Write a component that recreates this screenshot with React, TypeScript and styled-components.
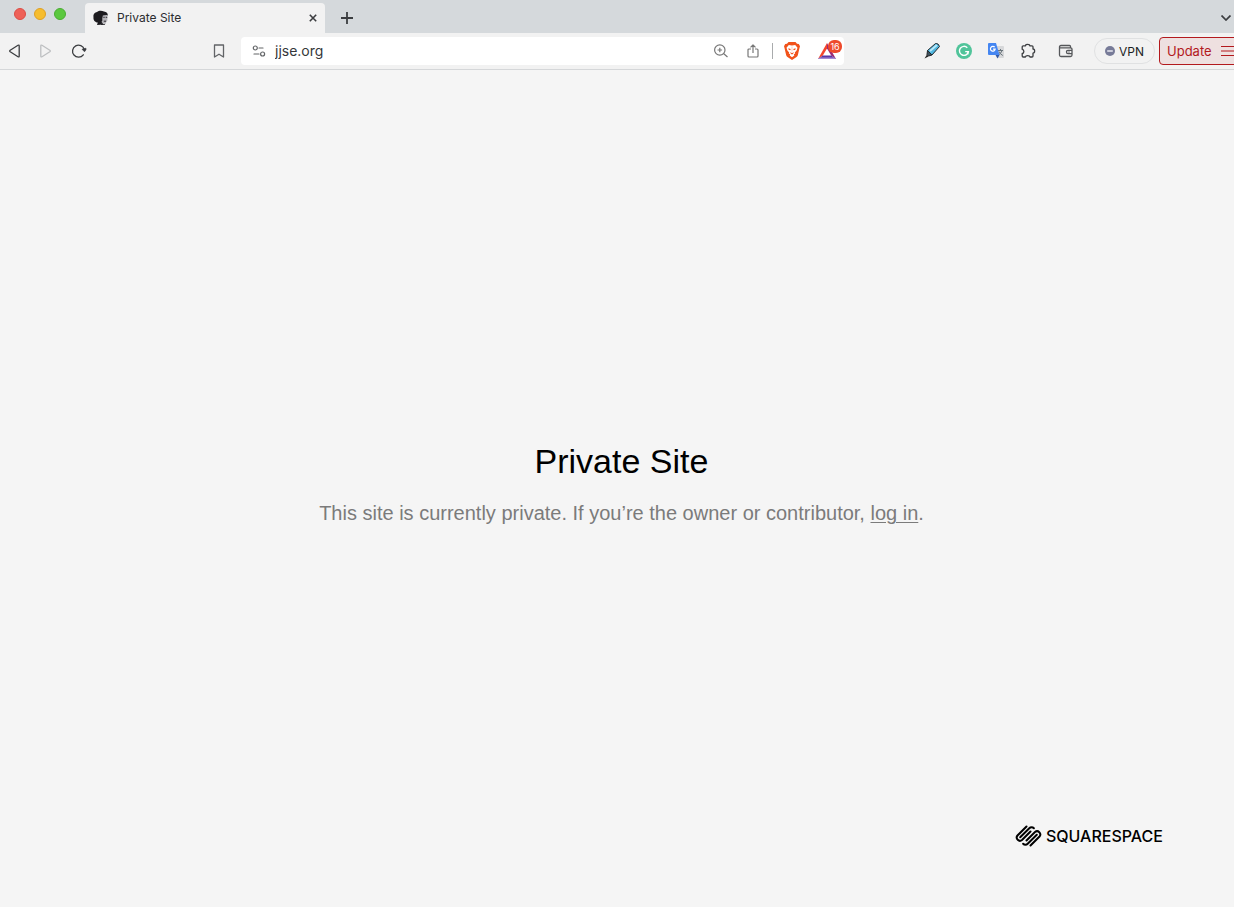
import React from "react";
import styled, { createGlobalStyle } from "styled-components";

const GlobalStyle = createGlobalStyle`
  *, *::before, *::after { box-sizing: border-box; }
  body { margin: 0; background: #f5f5f5; overflow: hidden; }
  button, input { font: inherit; color: inherit; }
  svg { display: block; flex: none; }
`;

const uiFont = `Inter, "Liberation Sans", sans-serif`;
const pageFont = `"Liberation Sans", Helvetica, Arial, sans-serif`;

/* The window runs slightly past the right edge of the screen. */
const BrowserWindow = styled.div`
  display: flex;
  flex-direction: column;
  min-height: 100vh;
  margin-right: -9px;
  font-family: ${uiFont};
`;

const TabStrip = styled.header`
  display: flex;
  height: 33px;
  padding-right: 9px;
  background: #d5d9dc;
`;

const WindowControls = styled.div`
  display: flex;
  gap: 8px;
  width: 85px;
  padding: 8px 0 0 14px;
`;

const ControlDot = styled.button<{ $fill: string; $edge: string }>`
  width: 12px;
  height: 12px;
  padding: 0;
  border: 1px solid ${(p) => p.$edge};
  border-radius: 50%;
  background: ${(p) => p.$fill};
`;

const Tab = styled.div`
  display: flex;
  align-items: center;
  width: 240px;
  margin-top: 3px;
  padding: 0 5px 0 8px;
  border-radius: 4px 4px 0 0;
  background: #f2f2f2;
`;

const TabTitle = styled.span`
  flex: 1;
  margin-left: 8px;
  font-size: 12px;
  line-height: 16px;
  color: #2b2d30;
`;

const IconButton = styled.button<{ $size?: number; $color?: string }>`
  display: flex;
  flex: none;
  align-items: center;
  justify-content: center;
  width: ${(p) => p.$size ?? 32}px;
  height: ${(p) => Math.min(p.$size ?? 28, 28)}px;
  padding: 0;
  border: 0;
  background: none;
  color: ${(p) => p.$color ?? "#3b3d40"};
`;

const NewTab = styled(IconButton)`
  margin: 4px auto 0 8px;
`;

const TabSearch = styled(IconButton)`
  margin-top: 10px;
`;

const Toolbar = styled.nav`
  display: flex;
  align-items: center;
  height: 37px;
  border-bottom: 1px solid #d5d7d9;
  background: #f2f2f2;
`;

const Navigation = styled.div`
  display: flex;
  width: 203px;
`;

const AddressBar = styled.div`
  display: flex;
  flex: 1;
  align-items: center;
  min-width: 200px;
  height: 28px;
  margin-left: 6px;
  padding-left: 8px;
  border-radius: 4px;
  background: #fff;
`;

const AddressInput = styled.input`
  flex: 1;
  min-width: 0;
  padding: 0;
  border: 0;
  outline: 0;
  margin-left: 6px;
  background: none;
  font-size: 14px;
  line-height: 20px;
  color: #35373a;
`;

const Divider = styled.span`
  width: 1px;
  height: 16px;
  margin: 0 3px;
  background: #a9abad;
`;

const RewardsButton = styled(IconButton)`
  position: relative;
  margin-left: 2px;
`;

const Badge = styled.span`
  position: absolute;
  top: 3px;
  right: 2px;
  width: 14px;
  height: 13px;
  border-radius: 6px;
  background: #ee4a2c;
  color: #fff;
  font-size: 9px;
  line-height: 13px;
  text-align: center;
`;

const Extensions = styled.div`
  display: flex;
  width: 311px;
  padding-left: 72px;
  align-items: center;
`;

const WalletButton = styled(IconButton)`
  margin: 0 12px 0 6px;
`;

const VpnButton = styled.button`
  display: flex;
  flex: none;
  align-items: center;
  justify-content: center;
  gap: 4px;
  width: 61px;
  height: 26px;
  padding: 0;
  border: 1px solid #e0e1e2;
  border-radius: 13px;
  background: #f2f2f2;
  font-size: 12px;
  color: #1d1f25;
`;

const UpdateButton = styled.button`
  display: flex;
  align-items: center;
  justify-content: space-between;
  width: 84px;
  height: 28px;
  padding: 0 5px 0 7px;
  margin-left: 4px;
  border: 1px solid #b3191d;
  border-radius: 4px;
  background: #eee0e0;
  font-size: 13px;
  color: #b3191d;
`;

const Page = styled.main`
  display: grid;
  flex: 1;
  grid-template-rows: 1fr auto 1fr;
  padding-bottom: 8px;
  background: #f5f5f5;
  font-family: ${pageFont};
`;

const Message = styled.section`
  grid-row: 2;
  text-align: center;
`;

const Heading = styled.h1`
  margin: 0 0 16px;
  font-size: 34px;
  font-weight: 400;
  line-height: 40px;
  color: #000;
`;

const Text = styled.p`
  margin: 0;
  font-size: 20px;
  line-height: 32px;
  color: #7b7b7b;
`;

const LoginLink = styled.a`
  color: inherit;
  text-decoration: underline;
  text-decoration-thickness: 1px;
  text-underline-offset: 2px;
`;

const Footer = styled.footer`
  display: flex;
  grid-row: 3;
  align-items: flex-end;
  justify-content: flex-end;
  padding: 0 80px 50px;
`;

const BrandLink = styled.a`
  display: flex;
  align-items: center;
  gap: 4px;
  color: #000;
  font-family: ${uiFont};
  font-size: 16px;
  font-weight: 500;
  line-height: 26px;
  text-decoration: none;
`;

const Favicon = () => (
  <svg width="16" height="16" viewBox="0 0 16 16" aria-hidden="true">
    <path d="M.5 7C0 4 2 2.200 4 2c2-1.800 5-1.500 7-.5 2.500.3 4 2 3.800 4L10 6 9.500 9l.8 2.500L7.500 14.800 4 15l.8-2.500C2 12.500 0 10 .5 7z" fill="#1c1b1f" />
    <path d="M9.800 5.500l4.400-.5.300 2.700-.2 3-1.800 2.500-2.500.6-1.500-1.800 1-2z" fill="#b5b4b9" />
    <path d="M10.300 7.300h1.400m1 0h1.500M10.800 11.200h2.200" stroke="#2a292d" strokeWidth="1" fill="none" />
    <path d="M8.500 12l2 2.200 2-.7-1 1.500H7.500z" fill="#2a292d" />
  </svg>
);

const Triangle = ({ flip }: { flip?: boolean }) => (
  <svg width="14" height="14" viewBox="0 0 14 14" fill="none" stroke="currentColor" strokeWidth="1.300" strokeLinejoin="round" aria-hidden="true">
    <path d={flip ? "M3 1.300Q1.800.6 1.800 2V12Q1.800 13.400 3 12.700L10.800 7.800Q11.800 7 10.800 6.200Z" : "M11 1.300Q12.200.6 12.200 2V12Q12.200 13.400 11 12.700L3.200 7.800Q2.200 7 3.200 6.200Z"} />
  </svg>
);

const Reload = () => (
  <svg width="16" height="16" viewBox="0 0 16 16" fill="none" stroke="currentColor" strokeWidth="1.300" aria-hidden="true">
    <path d="M12.300 11.800A6 6 0 1 1 13.300 6.500" strokeLinecap="round" />
    <path d="M11 6.200L15 5.200V6.800L13.500 8.800z" fill="currentColor" strokeWidth=".6" strokeLinejoin="round" />
  </svg>
);

const Bookmark = () => (
  <svg width="12" height="14" viewBox="0 0 12 14" fill="none" stroke="currentColor" strokeWidth="1.300" strokeLinejoin="round" aria-hidden="true">
    <path d="M1.500 1H10.500V13L6 10.200 1.500 13z" />
  </svg>
);

const SiteSettings = () => (
  <svg width="14" height="14" viewBox="0 0 14 14" fill="none" stroke="currentColor" strokeWidth="1.200" strokeLinecap="round" aria-hidden="true">
    <circle cx="3.300" cy="4" r="2" />
    <path d="M7 4h4M2 10h5" />
    <circle cx="10.600" cy="10" r="2" />
  </svg>
);

const ZoomIn = () => (
  <svg width="16" height="16" viewBox="0 0 16 16" fill="none" stroke="currentColor" strokeWidth="1.200" aria-hidden="true">
    <circle cx="6.800" cy="7" r="5.200" />
    <path d="M10.800 10.800L14.500 14M4.500 7h4.600M6.800 4.700v4.600" />
  </svg>
);

const Share = () => (
  <svg width="14" height="16" viewBox="0 0 14 16" fill="none" stroke="currentColor" strokeWidth="1.200" strokeLinejoin="round" aria-hidden="true">
    <path d="M5 6H3Q2 6 2 7V13Q2 14 3 14H11Q12 14 12 13V7Q12 6 11 6H9M7 10V2M4.500 4.300L7 1.800 9.500 4.300" />
  </svg>
);

const Shields = () => (
  <svg width="16" height="18" viewBox="0 0 16 18" aria-hidden="true">
    <path d="M4.500 0H11.500L13 1.700 14.800 1.900 16 4.300 15.500 6 13.800 13.200Q13.500 14.300 12.500 15L8 18 3.500 15Q2.500 14.300 2.200 13.200L.5 6 0 4.300 1.200 1.900 3 1.700z" fill="#f1521a" />
    <path d="M4.800 3L8 3.500 11.200 3 13.500 5.800 12.600 8.500 10.800 10.400 11.200 11.600 9.800 12.300 10.300 13.500 8 15.300 5.700 13.500 6.200 12.300 4.800 11.600 5.200 10.400 3.400 8.500 2.500 5.800z" fill="#fff" />
    <path d="M4.300 6.300L6.800 7 6.200 8.200 4.700 7.700zM11.700 6.300L9.200 7 9.800 8.200 11.300 7.700zM6.300 10L8 11.200 9.700 10 9.200 11.700 8 12.400 6.800 11.700z" fill="#f1521a" />
    <path d="M8 4.500v5" stroke="#f9b79e" strokeWidth=".7" />
  </svg>
);

const Rewards = () => (
  <svg width="18" height="16" viewBox="0 0 18 16" aria-hidden="true">
    <path d="M9 0L0 16 4.800 12.600 9 5.500z" fill="#f4452c" />
    <path d="M9 0L18 16 13.200 12.600 9 5.500z" fill="#9c2a73" />
    <path d="M0 16L4.800 12.600H13.200L18 16z" fill="#5a35a3" />
    <path d="M0 16L2 14.600H16L18 16z" fill="#a58ad3" />
  </svg>
);

const Highlighter = () => (
  <svg width="18" height="18" viewBox="0 0 18 18" aria-hidden="true">
    <path d="M4.500 8.500L12.500 1.500Q15.500 1 16.500 4.500L9 13z" fill="#4fb6df" stroke="#222a30" strokeWidth="1" strokeLinejoin="round" />
    <path d="M7 9L14 3" stroke="#b9e9fa" strokeWidth="2" />
    <path d="M4.500 8.500L9 13 5.500 14 4 12.500z" fill="#3f525e" stroke="#20262b" />
    <path d="M4 12.500L1.500 16.500 5.500 14.500z" fill="#222" />
  </svg>
);

const Grammarly = () => (
  <svg width="16" height="16" viewBox="0 0 16 16" aria-hidden="true">
    <circle cx="8" cy="8" r="8" fill="#50c49a" />
    <path d="M11.300 4.800A4.500 4.500 0 1 0 12.400 8.600H9.200" fill="none" stroke="#fff" strokeWidth="1.400" />
    <path d="M12 8.500V11.500" fill="none" stroke="#fff" strokeWidth="1" />
  </svg>
);

const Translate = () => (
  <svg width="16" height="16" viewBox="0 0 16 16" aria-hidden="true">
    <path d="M7 3H15Q16 3 16 4V14Q16 15 15 15H10z" fill="#d7d8da" />
    <path d="M10 7.500H15M12.500 6v1.500M14.200 7.500Q12.500 11 10.500 12M11 8.500Q12 11 14.800 12.500" stroke="#69747b" strokeWidth="1" fill="none" />
    <path d="M1 0H8L11.500 12H1Q0 12 0 11V1Q0 0 1 0z" fill="#4586f1" />
    <path d="M7.500 12h4L9.500 15.500z" fill="#3158a5" />
    <path d="M6.700 4.200A2.400 2.400 0 1 0 7.200 6.200H5" fill="none" stroke="#fff" strokeWidth="1.200" />
  </svg>
);

const Puzzle = () => (
  <svg width="16" height="16" viewBox="0 0 16 16" fill="none" stroke="currentColor" strokeWidth="1.300" strokeLinejoin="round" aria-hidden="true">
    <path d="M3.200 2.800H5.500C5.500.8 9.800.8 9.800 2.800H12Q13 2.800 13 3.800V6C15.200 6 15.200 10.200 13 10.200V13Q13 14 12 14H10C9.800 12.200 5.600 12.200 5.400 14H3.200Q2.200 14 2.200 13V10.500C4.400 10.300 4.400 6.500 2.200 6.300V3.800Q2.200 2.800 3.200 2.800z" />
  </svg>
);

const Wallet = () => (
  <svg width="16" height="14" viewBox="0 0 16 14" fill="none" stroke="currentColor" strokeWidth="1.300" strokeLinejoin="round" aria-hidden="true">
    <path d="M12.500 3.500V2.500Q12.500 1.500 11.500 1.500H3Q1.500 1.500 1.500 3V11Q1.500 12.500 3 12.500H12.500Q14 12.500 14 11V5Q14 3.800 12.500 3.800H2" />
    <path d="M14 6.300H10Q8.500 6.300 8.500 8T10 9.700H14M10.500 8h1" />
  </svg>
);

const VpnStatus = () => (
  <svg width="10" height="10" viewBox="0 0 10 10" aria-hidden="true">
    <circle cx="5" cy="5" r="5" fill="#777b98" />
    <path d="M2.200 5h5.600" stroke="#e8e9f2" strokeWidth="1.500" />
  </svg>
);

const Menu = () => (
  <svg width="16" height="12" viewBox="0 0 16 12" stroke="currentColor" aria-hidden="true">
    <path d="M0 1.500h16M0 6h16M0 10.500h16" strokeWidth="1.100" />
  </svg>
);

const Cross = () => (
  <svg width="8" height="8" viewBox="0 0 8 8" stroke="currentColor" strokeWidth="1.600" aria-hidden="true">
    <path d="M.8.8l6.400 6.400M7.200.8L.8 7.200" />
  </svg>
);

const Plus = () => (
  <svg width="12" height="12" viewBox="0 0 12 12" stroke="currentColor" strokeWidth="1.800" aria-hidden="true">
    <path d="M6 0v12M0 6h12" />
  </svg>
);

const Chevron = () => (
  <svg width="10" height="6" viewBox="0 0 10 6" fill="none" stroke="currentColor" strokeWidth="1.700" aria-hidden="true">
    <path d="M.5.5L5 5 9.500.5" />
  </svg>
);

const SquarespaceMark = () => (
  <svg width="27" height="22" viewBox="0 0 27 22" fill="none" stroke="currentColor" strokeWidth="2" strokeLinecap="round" aria-hidden="true">
    <path d="M11.500 1.500L2.500 10.500a3.200 3.200 0 0 0 4.500 4.500L15.500 6.500" />
    <path d="M5.200 12.300L14.300 3.200a3.200 3.200 0 0 1 4.600 0" />
    <path d="M15.500 20.500L24.500 11.500a3.200 3.200 0 0 0-4.500-4.500L11.500 15.500" />
    <path d="M21.800 9.700L12.700 18.800a3.200 3.200 0 0 1-4.600 0" />
  </svg>
);

export default function App() {
  return (
    <>
      <GlobalStyle />
      <BrowserWindow>
        <TabStrip>
          <WindowControls>
            <ControlDot aria-label="Close window" $fill="#ee6158" $edge="#dc4c45" />
            <ControlDot aria-label="Minimize window" $fill="#f6bd2f" $edge="#dfa023" />
            <ControlDot aria-label="Zoom window" $fill="#5bc83f" $edge="#4aad31" />
          </WindowControls>
          <Tab>
            <Favicon />
            <TabTitle>Private Site</TabTitle>
            <IconButton aria-label="Close tab" $size={14}><Cross /></IconButton>
          </Tab>
          <NewTab aria-label="New tab" $size={28}><Plus /></NewTab>
          <TabSearch aria-label="Search tabs" $size={16}><Chevron /></TabSearch>
        </TabStrip>

        <Toolbar aria-label="Browser toolbar">
          <Navigation>
            <IconButton aria-label="Back" $size={28}><Triangle /></IconButton>
            <IconButton aria-label="Forward" $size={36} $color="#bdbfc1"><Triangle flip /></IconButton>
            <IconButton aria-label="Reload" $size={30}><Reload /></IconButton>
          </Navigation>
          <IconButton aria-label="Bookmark" $color="#626467"><Bookmark /></IconButton>
          <AddressBar>
            <IconButton aria-label="Site settings" $size={20} $color="#626467"><SiteSettings /></IconButton>
            <AddressInput aria-label="Address" defaultValue="jjse.org" />
            <IconButton aria-label="Zoom" $color="#777"><ZoomIn /></IconButton>
            <IconButton aria-label="Share" $color="#777"><Share /></IconButton>
            <Divider />
            <IconButton aria-label="Shields"><Shields /></IconButton>
            <RewardsButton aria-label="Rewards" $size={34}>
              <Rewards />
              <Badge>16</Badge>
            </RewardsButton>
          </AddressBar>
          <Extensions>
            <IconButton aria-label="Highlighter"><Highlighter /></IconButton>
            <IconButton aria-label="Grammarly"><Grammarly /></IconButton>
            <IconButton aria-label="Translate"><Translate /></IconButton>
            <IconButton aria-label="Extensions"><Puzzle /></IconButton>
            <WalletButton aria-label="Wallet" $color="#55575a"><Wallet /></WalletButton>
            <VpnButton><VpnStatus />VPN</VpnButton>
          </Extensions>
          <UpdateButton>Update<Menu /></UpdateButton>
        </Toolbar>

        <Page>
          <Message>
            <Heading>Private Site</Heading>
            <Text>
              This site is currently private. If you’re the owner or contributor,{" "}
              <LoginLink href="#login">log in</LoginLink>.
            </Text>
          </Message>
          <Footer>
            <BrandLink href="#squarespace">
              <SquarespaceMark />
              SQUARESPACE
            </BrandLink>
          </Footer>
        </Page>
      </BrowserWindow>
    </>
  );
}
